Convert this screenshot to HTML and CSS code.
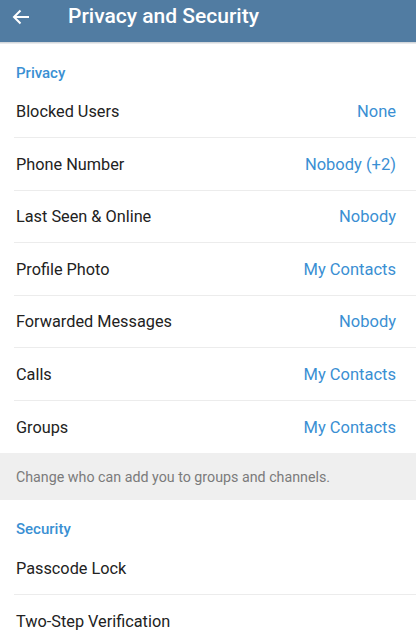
FILE: index.html
```html
<!DOCTYPE html>
<html>
<head>
<meta charset="utf-8">
<link rel="stylesheet" href="styles.css">
</head>
<body>
<header class="bar">
  <svg class="back" width="18" height="16" viewBox="0 0 18 16"><path d="M17 8H2M8.5 1.5L2 8l6.5 6.5" fill="none" stroke="#fff" stroke-width="2"/></svg>
  <span class="title">Privacy and Security</span>
</header>
<div class="shadow"></div>
<div class="section-title">Privacy</div>
<div class="list">
  <div class="row"><span class="label">Blocked Users</span><span class="value">None</span></div>
  <div class="row"><span class="label">Phone Number</span><span class="value">Nobody (+2)</span></div>
  <div class="row"><span class="label">Last Seen &amp; Online</span><span class="value">Nobody</span></div>
  <div class="row"><span class="label">Profile Photo</span><span class="value">My Contacts</span></div>
  <div class="row"><span class="label">Forwarded Messages</span><span class="value">Nobody</span></div>
  <div class="row"><span class="label">Calls</span><span class="value">My Contacts</span></div>
  <div class="row last"><span class="label">Groups</span><span class="value">My Contacts</span></div>
</div>
<div class="info">Change who can add you to groups and channels.</div>
<div class="section-title sec2">Security</div>
<div class="list">
  <div class="row"><span class="label">Passcode Lock</span></div>
  <div class="row last"><span class="label">Two-Step Verification</span></div>
</div>
</body>
</html>
```
FILE: styles.css
```css
* { box-sizing: border-box; }
html, body { margin: 0; padding: 0; background: #fff; }
body { font-family: Roboto, "Noto Sans", sans-serif; width: 416px; height: 640px; overflow: hidden; }
.bar { height: 42px; background: #517ca2; display: flex; align-items: flex-start; padding: 6px 0 0 12px; }
.back { margin-top: 3px; }
.title { color: #fff; font-size: 21px; font-weight: 500; margin-left: 38px; line-height: 20px; }
.shadow { height: 2px; background: linear-gradient(#c9ced3, #f2f3f4); }
.section-title { color: #3a90d3; font-size: 15px; font-weight: 500; padding: 20px 16px 0; height: 41.5px; line-height: 18px; }
.sec2 { height: 42px; }
.row { height: 52.5px; display: flex; align-items: center; justify-content: space-between; margin-left: 14px; padding: 1px 20px 0 2px; border-bottom: 1px solid #ececec; }
.row.last { border-bottom: none; }
.label { font-size: 16.3px; color: #222; }
.value { font-size: 16.5px; color: #3a8fd3; }
.info { background: #efefef; height: 47px; padding: 0 16px; display: flex; align-items: center; font-size: 14.25px; color: #7b7b7b; }
```
